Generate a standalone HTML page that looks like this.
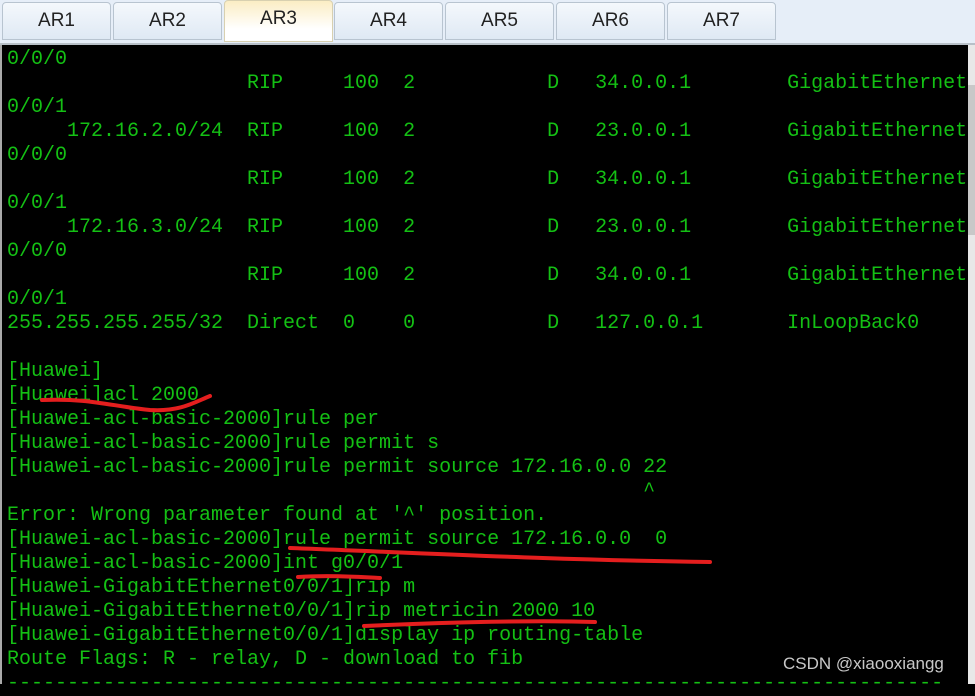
<!DOCTYPE html>
<html><head><meta charset="utf-8"><style>
body{margin:0;width:975px;height:684px;overflow:hidden;background:#000;position:relative;font-family:"Liberation Sans",sans-serif}
.tabs{position:absolute;left:0;top:0;width:975px;height:43px;background:#e6eef8;border-bottom:2px solid #b8c0c8}
.tab{position:absolute;top:2px;height:36px;width:107px;border:1px solid #b8c4d0;border-radius:4px 4px 0 0;background:linear-gradient(#f4f8fc,#dfe9f4);font-size:19px;color:#222;text-align:center;line-height:36px}
.tab.act{top:0;height:40px;background:linear-gradient(#fbedc4,#fff 70%);border-color:#d8d0b0}
.term{position:absolute;left:0;top:45px;width:968px;height:639px;background:#000;border-left:2px solid #aaa}
pre{position:absolute;left:5px;top:3px;margin:0;font-family:"Liberation Mono",monospace;font-size:20px;line-height:24px;color:#14c014;white-space:pre}
.sb{position:absolute;left:968px;top:45px;width:7px;height:639px;background:#e8e8e8}
.sb i{position:absolute;left:0;top:40px;width:7px;height:150px;background:#c8c8c8}
.wm{position:absolute;left:783px;top:654px;font-size:17px;color:#c8c8c8}
svg{position:absolute;left:0;top:0}
</style></head><body>
<div class="tabs">
<div class="tab" style="left:2px">AR1</div>
<div class="tab" style="left:113px">AR2</div>
<div class="tab act" style="left:224px">AR3</div>
<div class="tab" style="left:334px">AR4</div>
<div class="tab" style="left:445px">AR5</div>
<div class="tab" style="left:556px">AR6</div>
<div class="tab" style="left:667px">AR7</div>
</div>
<div class="term"><pre>0/0/0
                    RIP     100  2           D   34.0.0.1        GigabitEthernet
0/0/1
     172.16.2.0/24  RIP     100  2           D   23.0.0.1        GigabitEthernet
0/0/0
                    RIP     100  2           D   34.0.0.1        GigabitEthernet
0/0/1
     172.16.3.0/24  RIP     100  2           D   23.0.0.1        GigabitEthernet
0/0/0
                    RIP     100  2           D   34.0.0.1        GigabitEthernet
0/0/1
255.255.255.255/32  Direct  0    0           D   127.0.0.1       InLoopBack0

[Huawei]
[Huawei]acl 2000
[Huawei-acl-basic-2000]rule per
[Huawei-acl-basic-2000]rule permit s
[Huawei-acl-basic-2000]rule permit source 172.16.0.0 22
                                                     ^
Error: Wrong parameter found at '^' position.
[Huawei-acl-basic-2000]rule permit source 172.16.0.0  0
[Huawei-acl-basic-2000]int g0/0/1
[Huawei-GigabitEthernet0/0/1]rip m
[Huawei-GigabitEthernet0/0/1]rip metricin 2000 10
[Huawei-GigabitEthernet0/0/1]display ip routing-table
Route Flags: R - relay, D - download to fib
------------------------------------------------------------------------------</pre></div>
<div class="sb"><i></i></div>
<svg width="975" height="684"><g fill="none" stroke="#e41e1e" stroke-width="4" stroke-linecap="round">
<path d="M42 400 C90 398 110 406 150 410 C180 412 195 402 210 396"/>
<path d="M290 548 C400 552 550 560 710 562"/>
<path d="M298 577 C330 575 360 577 380 578"/>
<path d="M364 626 C450 622 540 620 595 622"/>
</g></svg>
<div class="wm">CSDN @xiaooxiangg</div>
</body></html>
